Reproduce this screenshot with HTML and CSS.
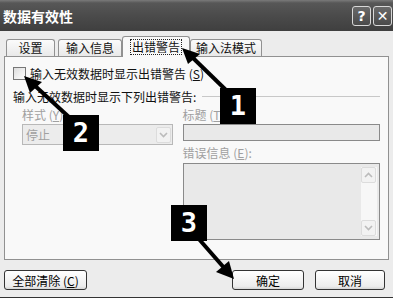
FILE: index.html
```html
<!DOCTYPE html>
<html lang="zh-CN">
<head>
    <meta charset="UTF-8">
    <title>数据有效性</title>
    <link rel="stylesheet" href="styles.css">
</head>
<body>

<div class="dialog">
    <div class="titlebar">
        <span class="title">数据有效性</span>
        <div class="tbtns">
            <span class="tbtn">?</span>
            <span class="tbtn">✕</span>
        </div>
    </div>

    <div class="tabs">
        <div class="tab t1">设置</div>
        <div class="tab t2">输入信息</div>
        <div class="tab active"><span class="focus">出错警告</span></div>
        <div class="tab t4">输入法模式</div>
    </div>

    <div class="panel">
        <div class="check"><span class="box"></span>输入无效数据时显示出错警告 (<u>S</u>)</div>

        <div class="group">
            <span>输入无效数据时显示下列出错警告:</span>
            <span class="rule"></span>
        </div>

        <div class="cols">
            <div class="left">
                <div class="lbl">样式 (<u>Y</u>):</div>
                <div class="select">
                    <span>停止</span>
                    <span class="dd"><svg width="9" height="6" viewBox="0 0 9 6"><path d="M1 1 L4.5 4.5 L8 1" fill="none" stroke="#bbb" stroke-width="1.6"/></svg></span>
                </div>
            </div>
            <div class="right">
                <div class="lbl">标题 (<u>T</u>):</div>
                <div class="input"></div>
                <div class="lbl msg">错误信息 (<u>E</u>):</div>
                <div class="textarea">
                    <div class="scroll">
                        <span class="sbtn"><svg width="9" height="6" viewBox="0 0 9 6"><path d="M1 5 L4.5 1.5 L8 5" fill="none" stroke="#bbb" stroke-width="1.6"/></svg></span>
                        <span class="sbtn"><svg width="9" height="6" viewBox="0 0 9 6"><path d="M1 1 L4.5 4.5 L8 1" fill="none" stroke="#bbb" stroke-width="1.6"/></svg></span>
                    </div>
                </div>
            </div>
        </div>
    </div>

    <div class="footer">
        <button class="btn clear">全部清除 (<u>C</u>)</button>
        <span class="spacer"></span>
        <button class="btn ok">确定</button>
        <button class="btn cancel">取消</button>
    </div>

    <!-- annotation overlay -->
    <svg class="arrows" width="393" height="298" viewBox="0 0 393 298">
        <line x1="228" y1="92" x2="192" y2="57" stroke="#000" stroke-width="4"/>
        <polygon points="182,48 200,54 188,64" fill="#000"/>
        <line x1="70" y1="118" x2="33" y2="84" stroke="#000" stroke-width="4"/>
        <polygon points="24,76 42,82 30,93" fill="#000"/>
        <line x1="198" y1="238" x2="226" y2="270" stroke="#000" stroke-width="4"/>
        <polygon points="234,279 216,272 229,261" fill="#000"/>
    </svg>
    <div class="badge b1">1</div>
    <div class="badge b2">2</div>
    <div class="badge b3">3</div>
</div>

</body>
</html>
```

FILE: styles.css
```css
body {
    margin: 0;
    font-family: "Noto Sans CJK SC", sans-serif;
    font-size: 12px;
}
.dialog {
    position: relative;
    width: 393px;
    height: 298px;
    box-sizing: border-box;
    background: #ececec;
    border-bottom: 1px solid #333;
    overflow: hidden;
}
.titlebar {
    height: 31px;
    display: flex;
    align-items: center;
    justify-content: space-between;
    padding: 0 1px 0 3px;
    box-sizing: border-box;
    background: linear-gradient(to bottom, #7a7a7a 0, #575757 3px, #4b4b4b 50%, #3f3f3f 100%);
}
.title {
    color: #fff;
    font-size: 14px;
    font-weight: bold;
    line-height: 16px;
}
.tbtns {
    display: flex;
    gap: 2px;
}
.tbtn {
    width: 17px;
    height: 18px;
    border: 1px solid #d8d8d8;
    border-radius: 3px;
    background: linear-gradient(#6a6a6a, #4a4a4a);
    color: #fff;
    font-family: "DejaVu Sans", sans-serif;
    font-weight: bold;
    font-size: 14px;
    line-height: 18px;
    text-align: center;
}
.tabs {
    display: flex;
    align-items: flex-end;
    height: 25px;
    padding-left: 6px;
    position: relative;
    z-index: 1;
}
.tab {
    height: 16px;
    border: 1px solid #919191;
    border-bottom: none;
    border-radius: 3px 3px 0 0;
    background: linear-gradient(#fbfbfb, #e9e9e9);
    color: #111;
    line-height: 16px;
    text-align: center;
}
.t1 { width: 47px; margin-right: 3px; }
.t2 { width: 62px; }
.t4 { width: 70px; }
.tab.active {
    width: 66px;
    height: 20px;
    margin-bottom: -1px;
    background: #f9f9f9;
    line-height: 20px;
}
.focus {
    display: inline-block;
    border: 1px dotted #222;
    line-height: 14px;
    padding: 0 1px;
}
.panel {
    margin: 0 4px;
    height: 204px;
    box-sizing: border-box;
    border: 1px solid #919191;
    background: #f9f9f9;
    padding: 9px 8px 0 8px;
}
.check {
    display: flex;
    align-items: center;
    height: 14px;
    color: #111;
}
.box {
    width: 11px;
    height: 11px;
    border: 1px solid #777;
    background: linear-gradient(135deg, #ddd, #fff);
    margin-right: 4px;
}
.group {
    display: flex;
    align-items: center;
    margin-top: 9px;
    height: 14px;
    color: #111;
}
.rule {
    flex: 1;
    height: 1px;
    background: #c8c8c8;
    margin-left: 6px;
}
.cols {
    display: flex;
    margin-top: 5px;
    padding-left: 9px;
}
.left {
    width: 151px;
}
.right {
    width: 198px;
    margin-left: 10px;
}
.lbl {
    height: 14px;
    line-height: 14px;
    color: #a0a0a0;
}
.select {
    margin-top: 2px;
    height: 21px;
    box-sizing: border-box;
    border: 1px solid #b8b8b8;
    background: #ececec;
    display: flex;
    align-items: center;
    justify-content: space-between;
    padding: 0 1px 0 3px;
    color: #a0a0a0;
}
.dd, .sbtn {
    width: 15px;
    height: 16px;
    box-sizing: border-box;
    border: 1px solid #dcdcdc;
    border-radius: 2px;
    background: #f2f2f2;
    display: flex;
    align-items: center;
    justify-content: center;
}
.input {
    margin-top: 2px;
    height: 17px;
    box-sizing: border-box;
    border: 1px solid #8a8a8a;
    background: #e9e9e9;
}
.msg {
    margin-top: 5px;
}
.textarea {
    margin-top: 3px;
    height: 77px;
    box-sizing: border-box;
    border: 1px solid #8a8a8a;
    background: #e9e9e9;
    display: flex;
    justify-content: flex-end;
}
.scroll {
    width: 16px;
    margin: 3px 2px 3px 0;
    background: #f7f7f7;
    display: flex;
    flex-direction: column;
    justify-content: space-between;
}
.footer {
    display: flex;
    margin-top: 10px;
    padding: 0 8px 0 4px;
}
.spacer {
    flex: 1;
}
.btn {
    height: 20px;
    box-sizing: border-box;
    border: 1px solid #333;
    border-radius: 3px;
    background: linear-gradient(#ffffff, #ececec 85%, #d6d6d6);
    font-family: "Noto Sans CJK SC", sans-serif;
    font-size: 12px;
    color: #000;
    padding: 0;
    line-height: 17px;
}
.clear { width: 83px; }
.ok { width: 72px; }
.cancel { width: 70px; margin-left: 11px; }
.arrows {
    position: absolute;
    left: 0;
    top: 0;
    z-index: 2;
}
.badge {
    position: absolute;
    z-index: 3;
    width: 36px;
    height: 36px;
    background: #000;
    color: #fff;
    font-family: "DejaVu Sans Mono", monospace;
    font-weight: bold;
    font-size: 27px;
    line-height: 36px;
    text-align: center;
}
.b1 { left: 220px; top: 88px; }
.b2 { left: 63px; top: 115px; }
.b3 { left: 171px; top: 205px; }
```
